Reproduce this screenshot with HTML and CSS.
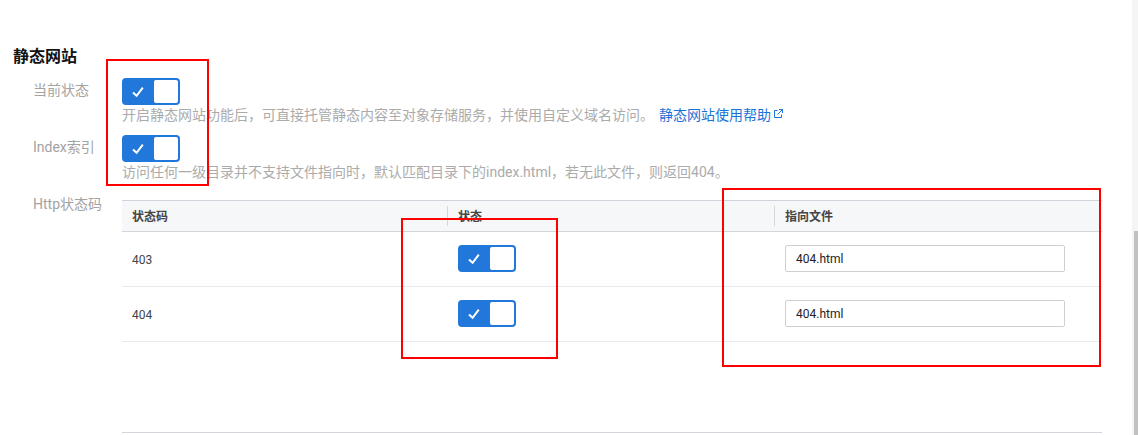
FILE: index.html
```html
<!DOCTYPE html>
<html lang="zh-CN">
<head>
<meta charset="utf-8">
<title>静态网站</title>
<link rel="stylesheet" href="styles.css">
</head>
<body>
<div class="page">
  <main class="main">
    <h2 class="title">静态网站</h2>
    <div class="row">
      <div class="label">当前状态</div>
      <div class="control">
        <span class="toggle"><svg class="check" viewBox="0 0 12 12"><polyline points="1,6.5 4.6,9.8 10.8,1.6"/></svg><span class="knob"></span></span>
        <p class="desc">开启静态网站功能后，可直接托管静态内容至对象存储服务，并使用自定义域名访问。<a class="link" href="#">静态网站使用帮助<svg class="ext" viewBox="0 0 9 9"><path d="M3.5 1.5H.5v7h7v-3"/><path d="M5 .5h3.5V4M8.2.8 3.5 5.5"/></svg></a></p>
      </div>
    </div>
    <div class="row">
      <div class="label">Index索引</div>
      <div class="control">
        <span class="toggle"><svg class="check" viewBox="0 0 12 12"><polyline points="1,6.5 4.6,9.8 10.8,1.6"/></svg><span class="knob"></span></span>
        <p class="desc">访问任何一级目录并不支持文件指向时，默认匹配目录下的index.html，若无此文件，则返回404。</p>
      </div>
    </div>
    <div class="row row-table">
      <div class="label">Http状态码</div>
      <div class="control">
        <div class="table">
          <div class="thead">
            <div class="th">状态码</div>
            <div class="th sep">状态</div>
            <div class="th sep">指向文件</div>
          </div>
          <div class="tr">
            <div class="td td-code">403</div>
            <div class="td"><span class="toggle"><svg class="check" viewBox="0 0 12 12"><polyline points="1,6.5 4.6,9.8 10.8,1.6"/></svg><span class="knob"></span></span></div>
            <div class="td"><input class="input" type="text" value="404.html"></div>
          </div>
          <div class="tr">
            <div class="td td-code">404</div>
            <div class="td"><span class="toggle"><svg class="check" viewBox="0 0 12 12"><polyline points="1,6.5 4.6,9.8 10.8,1.6"/></svg><span class="knob"></span></span></div>
            <div class="td"><input class="input" type="text" value="404.html"></div>
          </div>
        </div>
        <div class="rule"></div>
      </div>
    </div>
  </main>
  <div class="scrollbar"><div class="thumb"></div></div>
</div>
<div class="mark mark-a"></div>
<div class="mark mark-b"></div>
<div class="mark mark-c"></div>
</body>
</html>
```
FILE: styles.css
```css
* { box-sizing: border-box; }
html, body { margin: 0; padding: 0; height: 435px; overflow: hidden; background: #fff; }
body { font-family: Roboto, "Noto Sans CJK SC", sans-serif; font-size: 14px; color: #444; position: relative; }
.page { display: flex; height: 435px; }
.main { flex: 1; min-width: 0; padding: 44px 30px 0 13px; }
.title { margin: 0 0 8px; font-size: 16px; line-height: 26px; font-weight: 700; color: #111; }
.row { display: grid; grid-template-columns: 109px 1fr; padding-bottom: 10px; }
.label { padding-left: 20px; line-height: 24px; color: #a3a3a3; font-size: 14px; white-space: nowrap; }
.control { min-width: 0; }
.toggle { display: block; position: relative; width: 58px; height: 27px; background: #2277da; border-radius: 4px; }
.knob { position: absolute; top: 2px; right: 2px; bottom: 2px; width: 24px; background: #fff; border-radius: 2px; }
.check { position: absolute; left: 10px; top: 8px; width: 12px; height: 12px; fill: none; stroke: #fff; stroke-width: 2; }
.desc { margin: 0; line-height: 20px; color: #ababab; font-size: 14px; white-space: nowrap; }
.link { color: #1a73d9; text-decoration: none; margin-left: 5px; }
.ext { width: 9px; height: 9px; margin-left: 3px; fill: none; stroke: #1a73d9; stroke-width: 1; vertical-align: 2px; }
.row-table { padding-top: 8px; padding-bottom: 0; }
.row-table .label { margin-top: -8px; }
.table { font-size: 12px; }
.thead { display: grid; grid-template-columns: 325px 327px 1fr; height: 32px; align-items: center; background: #f6f7f9; border-top: 1px solid #cfd3dc; border-bottom: 1px solid #d3d6dd; }
.th { padding-left: 10px; height: 20px; line-height: 22px; font-weight: 700; color: #444; }
.sep { border-left: 1px solid #d3d6dd; }
.tr { display: grid; grid-template-columns: 325px 327px 1fr; height: 55px; padding-bottom: 1px; align-items: center; border-bottom: 1px solid #e7e9ee; }
.td { padding-left: 10px; color: #444; }
.td:nth-child(n+2) { padding-left: 11px; }
.td-code { padding-top: 3px; }
.input { display: block; width: 280px; height: 27px; padding: 0 10px; border: 1px solid #cfcfd3; border-radius: 2px; font: 12px Roboto, sans-serif; color: #222; background: #fff; outline: none; }
.rule { margin-top: 90px; border-top: 1px solid #d3d6dd; }
.scrollbar { width: 6px; display: flex; flex-direction: column; justify-content: flex-end; background: #f5f5f5; }
.thumb { height: 204px; margin-left: 2px; background: #c1c1c1; }
.mark { position: absolute; border: 2px solid #f00; }
.mark-a { left: 106px; top: 59px; width: 103px; height: 127px; }
.mark-b { left: 401px; top: 218px; width: 157px; height: 141px; }
.mark-c { left: 722px; top: 188px; width: 379px; height: 179px; }
```
